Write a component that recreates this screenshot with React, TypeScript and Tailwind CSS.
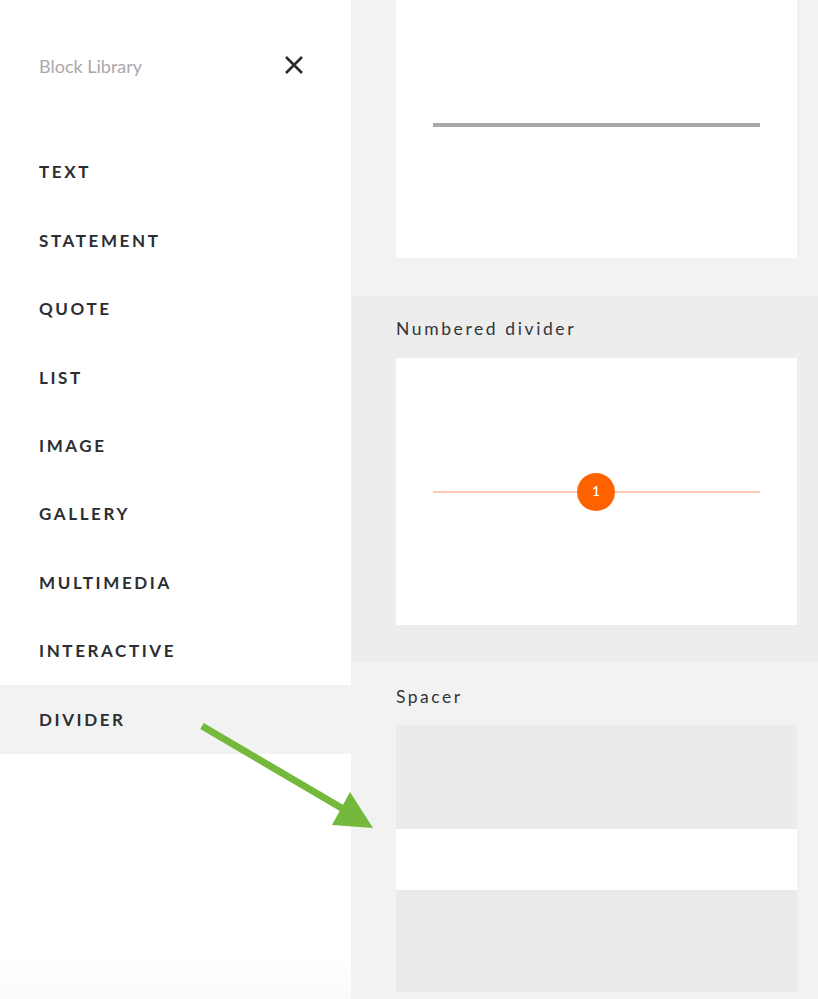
import React from "react";

const items = ["TEXT", "STATEMENT", "QUOTE", "LIST", "IMAGE", "GALLERY", "MULTIMEDIA", "INTERACTIVE", "DIVIDER"];

const App: React.FC = () => {
  return (
    <div className="relative flex h-[999px] w-[818px] overflow-hidden font-['Lato','Open_Sans',sans-serif]">
      {/* Sidebar */}
      <div className="flex w-[351px] flex-col bg-gradient-to-b from-white from-[96%] to-[#fafafa]">
        <div className="flex h-[138px] items-start justify-between pl-[39px] pr-[47px] pt-[53px]">
          <span className="text-[18px] text-[#a9a9a9]">Block Library</span>
          <svg width="20" height="20" viewBox="0 0 20 20" className="mt-[2px]">
            <path d="M2 2 L18 18 M18 2 L2 18" stroke="#2b2b2b" strokeWidth="2.6" strokeLinecap="butt" />
          </svg>
        </div>
        {items.map((item) => (
          <div
            key={item}
            className={`flex h-[68.4px] items-center pl-[39px] text-[17px] font-bold tracking-[2.6px] text-[#2c2e31] ${
              item === "DIVIDER" ? "bg-[#f2f2f2]" : ""
            }`}
          >
            {item}
          </div>
        ))}
      </div>

      {/* Preview column */}
      <div className="flex flex-1 flex-col">
        <div className="h-[296px] bg-[#f2f2f2] pl-[45px]">
          <div className="flex h-[258px] w-[401px] justify-center bg-white pt-[123px]">
            <div className="h-[4px] w-[327px] bg-[#a8a8a8]" />
          </div>
        </div>

        <div className="h-[366px] bg-[#ededed] pl-[45px] pt-[20px]">
          <div className="text-[17.5px] tracking-[2.6px] text-[#333539]">Numbered divider</div>
          <div className="mt-[16px] flex h-[267px] w-[401px] items-center justify-center bg-white">
            <div className="relative flex h-[38px] w-[327px] items-center">
              <div className="h-[2px] w-full bg-[#ffcbb8]" />
              <div className="absolute left-[144px] top-0 flex h-[38px] w-[38px] items-center justify-center rounded-full bg-[#ff6300] text-[13px] font-semibold text-white">
                1
              </div>
            </div>
          </div>
        </div>

        <div className="flex-1 bg-[#f2f2f2] pl-[45px] pt-[22px]">
          <div className="text-[17.5px] tracking-[2.5px] text-[#333539]">Spacer</div>
          <div className="mt-[15px] flex w-[401px] flex-col">
            <div className="h-[104px] bg-[#ebebeb]" />
            <div className="h-[61px] bg-white" />
            <div className="h-[102px] bg-[#eaeaea]" />
          </div>
        </div>
      </div>

      {/* Green arrow annotation */}
      <svg className="absolute left-0 top-0" width="818" height="999" viewBox="0 0 818 999">
        <line x1="202" y1="726" x2="345" y2="810" stroke="#74b93b" strokeWidth="7" />
        <polygon points="332,825 350,792 373,828" fill="#74b93b" />
      </svg>
    </div>
  );
};

export default App;
